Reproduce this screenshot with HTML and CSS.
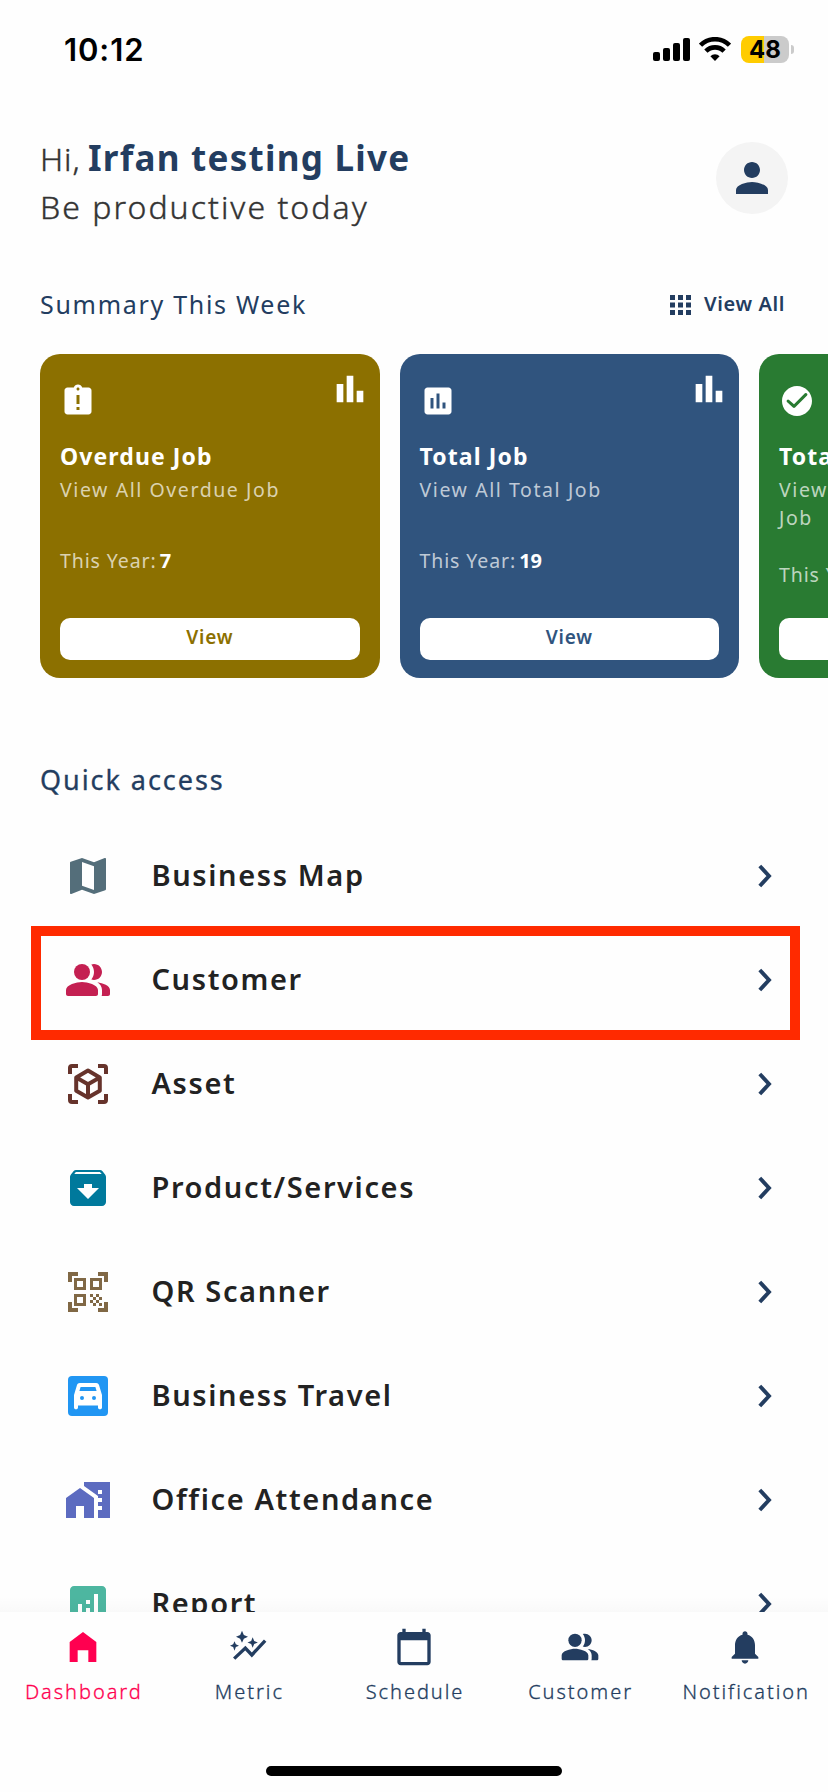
FILE: index.html
```html
<!DOCTYPE html>
<html lang="en">
<head>
<meta charset="utf-8">
<title>Dashboard</title>
<link rel="stylesheet" href="styles.css">
</head>
<body>
<svg width="0" height="0" class="defs" aria-hidden="true">
  <symbol id="chart" viewBox="0 0 24 24"><path d="M4 9h4v11H4zM10 4h4v16h-4zM16 13h4v7h-4z"/></symbol>
  <symbol id="chev" viewBox="0 0 14 24"><path d="M1.800 2 11 12 1.800 22" fill="none" stroke="currentColor" stroke-width="3.900" stroke-linejoin="miter"/></symbol>
  <symbol id="group" viewBox="0 0 24 24"><path d="M16.670 13.130C18.040 14.060 19 15.320 19 17v2c0 .35-.06.69-.18 1H22c.55 0 1-.45 1-1v-2c0-2.180-3.570-3.470-6.330-3.870z"/><circle cx="9" cy="8" r="4"/><path d="M15 12c2.210 0 4-1.790 4-4s-1.790-4-4-4c-.47 0-.91.10-1.330.24C14.500 5.270 15 6.580 15 8s-.5 2.730-1.330 3.760c.42.14.86.24 1.330.24zM9 13c-2.670 0-8 1.340-8 4v2c0 .55.45 1 1 1h14c.55 0 1-.45 1-1v-2c0-2.660-5.330-4-8-4z"/></symbol>
</svg>
<div class="screen">
  <main class="content">
    <header class="status">
      <span class="time">10:12</span>
      <div class="status-icons">
        <svg class="signal" viewBox="0 0 38 24"><rect x="0" y="15" width="7" height="9" rx="2"/><rect x="10" y="11" width="7" height="13" rx="2"/><rect x="20" y="6" width="7" height="18" rx="2"/><rect x="30" y="1" width="7" height="23" rx="2"/></svg>
        <svg class="wifi" viewBox="0 0 32 24"><g fill="none" stroke="#000" stroke-width="4.600"><path d="M1.500 8.200a20.500 20.500 0 0 1 29 0"/><path d="M6.900 14.200a12.800 12.800 0 0 1 18.200 0"/></g><path d="M16 24l-4.600-4.800a6.500 6.500 0 0 1 9.200 0z"/></svg>
        <div class="battery">48</div><span class="nub"></span>
      </div>
    </header>

    <section class="greeting">
      <div>
        <div class="hello"><span class="hi">Hi,</span><strong class="name">Irfan testing Live</strong></div>
        <div class="tagline">Be productive today</div>
      </div>
      <div class="avatar"><svg viewBox="0 0 24 24"><path d="M12 12c2.210 0 4-1.790 4-4s-1.790-4-4-4-4 1.790-4 4 1.790 4 4 4zm0 2c-2.670 0-8 1.340-8 4v2h16v-2c0-2.660-5.330-4-8-4z"/></svg></div>
    </section>

    <div class="section-head">
      <h2 class="summary-title">Summary This Week</h2>
      <a class="view-all"><svg viewBox="0 0 21 20"><path d="M0 0h5v5H0zM8 0h5v5H8zM16 0h5v5h-5zM0 7.500h5v5H0zM8 7.500h5v5H8zM16 7.500h5v5h-5zM0 15h5v5H0zM8 15h5v5H8zM16 15h5v5h-5z"/></svg><span>View All</span></a>
    </div>

    <section class="cards">
      <article class="card gold">
        <svg class="trend"><use href="#chart"/></svg>
        <svg class="kind" viewBox="0 0 24 24"><path fill-rule="evenodd" d="M19 3h-4.180C14.400 1.840 13.300 1 12 1s-2.400.84-2.820 2H5c-1.100 0-2 .9-2 2v14c0 1.100.9 2 2 2h14c1.100 0 2-.9 2-2V5c0-1.100-.9-2-2-2zm-6 15h-2v-2h2v2zm0-4h-2V8h2v6zm-1-9c-.55 0-1-.45-1-1s.45-1 1-1 1 .45 1 1-.45 1-1 1z"/></svg>
        <h3>Overdue Job</h3>
        <p class="sub">View All Overdue Job</p>
        <p class="year"><span>This Year:</span><b>7</b></p>
        <div class="btn">View</div>
      </article>
      <article class="card blue">
        <svg class="trend"><use href="#chart"/></svg>
        <svg class="kind" viewBox="0 0 24 24"><path fill-rule="evenodd" d="M19 3H5c-1.100 0-2 .9-2 2v14c0 1.100.9 2 2 2h14c1.100 0 2-.9 2-2V5c0-1.100-.9-2-2-2zM9 17H7v-7h2v7zm4 0h-2V7h2v10zm4 0h-2v-4h2v4z"/></svg>
        <h3>Total Job</h3>
        <p class="sub">View All Total Job</p>
        <p class="year"><span>This Year:</span><b>19</b></p>
        <div class="btn">View</div>
      </article>
      <article class="card green">
        <svg class="kind" viewBox="0 0 24 24"><path fill-rule="evenodd" d="M12 2C6.480 2 2 6.480 2 12s4.480 10 10 10 10-4.480 10-10S17.520 2 12 2zM10.700 16.300c-.39.39-1.020.39-1.410 0L5.300 12.710A1 1 0 0 1 6.710 11.300L10 14.170l7.290-7.290A1 1 0 0 1 18.700 8.290z"/></svg>
        <h3>Total</h3>
        <p class="sub">View<br>Job</p>
        <p class="year"><span>This Year:</span></p>
        <div class="btn"></div>
      </article>
    </section>

    <h2 class="quick-title">Quick access</h2>
    <ul class="rows">
      <li class="row"><svg class="ico map" viewBox="0 0 24 24"><path fill-rule="evenodd" d="M20.500 3l-.16.03L15 5.100 9 3 3.360 4.900c-.21.07-.36.25-.36.48V20.500c0 .28.22.5.5.5l.16-.03L9 18.900l6 2.100 5.640-1.900c.21-.07.36-.25.36-.48V3.500c0-.28-.22-.5-.5-.5zM15 19l-6-2.110V5l6 2.110V19z"/></svg><span class="label">Business Map</span><svg class="chev"><use href="#chev"/></svg></li>
      <li class="row marked"><svg class="ico people"><use href="#group"/></svg><span class="label">Customer</span><svg class="chev"><use href="#chev"/></svg></li>
      <li class="row"><svg class="ico asset" viewBox="0 0 24 24"><g fill="none" stroke="currentColor" stroke-width="2"><path d="M3 7V4a1 1 0 0 1 1-1h3M17 3h3a1 1 0 0 1 1 1v3M21 17v3a1 1 0 0 1-1 1h-3M7 21H4a1 1 0 0 1-1-1v-3"/><path stroke-linejoin="round" d="M12 5.300 6.100 8.700v6.700L12 18.800l5.900-3.400V8.700zM6.100 8.700 12 12.100l5.900-3.400M12 12.100v6.700"/></g></svg><span class="label">Asset</span><svg class="chev"><use href="#chev"/></svg></li>
      <li class="row"><svg class="ico archive" viewBox="0 0 24 24"><path fill-rule="evenodd" d="M20.540 5.230l-1.390-1.680C18.880 3.210 18.470 3 18 3H6c-.47 0-.88.21-1.160.55L3.460 5.230C3.170 5.570 3 6.020 3 6.500V19c0 1.100.9 2 2 2h14c1.100 0 2-.9 2-2V6.500c0-.48-.17-.93-.46-1.270zM12 17.500L6.500 12H10v-2h4v2h3.500L12 17.500zM5.120 5l.81-1h12l.94 1H5.120z"/></svg><span class="label">Product/Services</span><svg class="chev"><use href="#chev"/></svg></li>
      <li class="row"><svg class="ico qr" viewBox="0 0 24 24"><path fill-rule="evenodd" d="M9.500 6.500v3h-3v-3h3M11 5H5v6h6V5zm-1.500 9.500v3h-3v-3h3M11 13H5v6h6v-6zm6.500-6.500v3h-3v-3h3M19 5h-6v6h6V5zm-6 8h1.500v1.500H13V13zm1.500 1.500H16V16h-1.500v-1.500zM16 13h1.500v1.500H16V13zm-3 3h1.500v1.500H13V16zm1.500 1.500H16V19h-1.500v-1.500zM16 16h1.500v1.500H16V16zm1.500-1.500H19V16h-1.500v-1.500zm0 3H19V19h-1.500v-1.500zM22 7h-2V4h-3V2h5v5zm0 15v-5h-2v3h-3v2h5zM2 22h5v-2H4v-3H2v5zM2 2v5h2V4h3V2H2z"/></svg><span class="label">QR Scanner</span><svg class="chev"><use href="#chev"/></svg></li>
      <li class="row"><svg class="ico travel" viewBox="0 0 24 24"><rect x="2" y="2" width="20" height="20" rx="2"/><path fill="#fff" fill-rule="evenodd" d="M17.500 6.500c-.2-.6-.7-1-1.400-1H7.900c-.7 0-1.200.4-1.400 1L5 11.500v6.200c0 .5.4.9 1 .9s1-.4 1-.9v-.9h10v.9c0 .5.4.9 1 .9s1-.4 1-.9v-6.200zM8.300 7.500h7.400l.6 2H7.700zM9 14a1 1 0 1 1 0-2 1 1 0 0 1 0 2zM15 14a1 1 0 1 1 0-2 1 1 0 0 1 0 2z"/></svg><span class="label">Business Travel</span><svg class="chev"><use href="#chev"/></svg></li>
      <li class="row"><svg class="ico office" viewBox="0 0 24 24"><path d="M1 11v10h5v-6h4v6h5V11L8 6z"/><path fill-rule="evenodd" d="M10 3v1.970l7 5V11h2v2h-2v2h2v2h-2v4h6V3H10zm9 6h-2V7h2v2z"/></svg><span class="label">Office Attendance</span><svg class="chev"><use href="#chev"/></svg></li>
      <li class="row"><svg class="ico report" viewBox="0 0 24 24"><path fill-rule="evenodd" d="M19 3H5c-1.100 0-2 .9-2 2v14c0 1.100.9 2 2 2h14c1.100 0 2-.9 2-2V5c0-1.100-.9-2-2-2zM9 17H7v-5h2v5zm4 0h-2v-3h2v3zm0-5h-2v-2h2v2zm4 5h-2V7h2v10z"/></svg><span class="label">Report</span><svg class="chev"><use href="#chev"/></svg></li>
    </ul>
    <div class="fade"></div>
  </main>

  <nav class="tabs">
    <a class="tab active"><svg viewBox="0 0 24 24"><path d="M4 9v12h4.800v-7h6.400v7H20V9l-8-6z"/></svg><span>Dashboard</span></a>
    <a class="tab"><svg viewBox="0 0 24 24"><path d="M3.700 19 10.400 12.600 14.300 16.800 22.300 8.200" fill="none" stroke="currentColor" stroke-width="2"/><path d="M8.400 2.300l1.100 2.500L12 5.900 9.500 7 8.400 9.500 7.300 7 4.800 5.900l2.500-1.100zM3.900 8.500l.8 1.900 1.900.8-1.900.8-.8 2.200-.8-2.200-1.900-.8 1.900-.8zM14.800 6.200l.9 2.200 2.200.9-2.200.9-.9 2.200-.9-2.200-2.200-.9 2.200-.9z"/></svg><span>Metric</span></a>
    <a class="tab"><svg viewBox="0 0 24 24"><path fill-rule="evenodd" d="M20 3h-1V1h-2v2H7V1H5v2H4c-1.100 0-2 .9-2 2v16c0 1.100.9 2 2 2h16c1.100 0 2-.9 2-2V5c0-1.100-.9-2-2-2zm0 18H4V8h16v13z"/></svg><span>Schedule</span></a>
    <a class="tab"><svg><use href="#group"/></svg><span>Customer</span></a>
    <a class="tab"><svg viewBox="0 0 24 24"><path d="M12 22c1.100 0 2-.9 2-2h-4c0 1.100.89 2 2 2zm6-6v-5c0-3.070-1.640-5.640-4.500-6.320V4c0-.83-.67-1.500-1.500-1.500s-1.500.67-1.500 1.500v.68C7.630 5.360 6 7.920 6 11v5l-2 2v1h16v-1l-2-2z"/></svg><span>Notification</span></a>
  </nav>
  <div class="home-bar"></div>
</div>
</body>
</html>
```
FILE: styles.css
```css
*, *::after { box-sizing: border-box; }
body { margin: 0; background: #fefefe; color: #233d60; font-family: "Noto Sans", "Open Sans", sans-serif; }
h2, h3, p, ul { margin: 0; padding: 0; }
svg { display: block; fill: currentColor; flex: none; }
.defs { position: absolute; }
.screen { width: 828px; height: 1792px; overflow: hidden; display: flex; flex-direction: column; }
.content { position: relative; height: 1612px; flex: none; overflow: hidden; }

.status { height: 100px; padding: 0 34px 0 64px; display: flex; justify-content: space-between; color: #000; font-family: Inter, sans-serif; }
.time { font-size: 31px; font-weight: 600; line-height: 40px; padding-top: 30px; letter-spacing: .9px; }
.status-icons { display: flex; align-items: flex-start; padding-top: 36px; }
.signal { width: 38px; height: 24px; margin: 1px 8px 0 0; }
.wifi { width: 32px; height: 24px; margin: 1px 10px 0 0; }
.battery { width: 48px; height: 27px; border-radius: 8px; background: linear-gradient(90deg, #ffcc00 48%, #cbcbcb 48%); font-size: 24px; font-weight: 700; line-height: 27px; text-align: center; }
.nub { width: 3px; height: 9px; margin: 9px 0 0 2px; border-radius: 0 4px 4px 0; background: #cbcbcb; }

.greeting { display: flex; justify-content: space-between; padding: 33px 40px 0; height: 184px; color: #333; }
.hello { display: flex; align-items: baseline; height: 49px; line-height: 49px; white-space: nowrap; }
.hi { font-size: 32px; font-weight: 300; width: 48px; letter-spacing: .9px; -webkit-text-stroke: .4px currentColor; }
.name { font-size: 35px; font-weight: 700; color: #233d60; letter-spacing: 1.250px; }
.tagline { font-size: 32px; font-weight: 300; line-height: 49px; letter-spacing: 2.030px; -webkit-text-stroke: .4px currentColor; }
.avatar { width: 72px; height: 72px; margin-top: 9px; border-radius: 50%; background: #f4f4f4; display: flex; align-items: center; justify-content: center; color: #233d60; }
.avatar svg { width: 48px; height: 48px; }

.section-head { display: flex; justify-content: space-between; height: 40px; padding: 0 43px 0 40px; line-height: 40px; }
.summary-title { font-size: 25px; font-weight: 400; letter-spacing: 1.700px; }
.view-all { display: flex; align-items: center; gap: 13px; font-size: 20px; font-weight: 600; letter-spacing: .6px; }
.view-all svg { width: 21px; height: 20px; margin-top: 2px; }

.cards { display: flex; gap: 20px; margin-top: 30px; padding-left: 40px; height: 324px; }
.card { position: relative; flex: 0 0 339.500px; padding: 29px 20px 18px; border-radius: 20px; color: #fff; display: flex; flex-direction: column; white-space: nowrap; }
.gold { background: #8c7000; --tone: #8c7000; }
.blue { background: #30547e; --tone: #30547e; }
.green { background: #297b32; --tone: #297b32; }
.trend { position: absolute; right: 10px; top: 15px; width: 40px; height: 40px; }
.kind { width: 36px; height: 36px; }
.card h3 { font-size: 23px; font-weight: 700; line-height: 32px; margin-top: 21px; letter-spacing: 1.100px; }
.sub { font-size: 19.500px; line-height: 28px; min-height: 42px; margin-top: 4px; letter-spacing: 1.580px; color: rgba(255,255,255,.7); }
.year { display: flex; align-items: baseline; gap: 3px; font-size: 19.500px; line-height: 28px; margin-top: 29px; color: rgba(255,255,255,.7); letter-spacing: .9px; }
.year b { font-size: 20px; color: #fff; letter-spacing: 0; }
.btn { height: 42px; margin-top: auto; border-radius: 10px; background: #fff; color: var(--tone); font-size: 19px; font-weight: 600; line-height: 39px; text-align: center; letter-spacing: .8px; }

.quick-title { margin: 82px 0 24px 40px; font-size: 27px; font-weight: 400; line-height: 40px; letter-spacing: 1.950px; -webkit-text-stroke: .3px currentColor; }
.rows { list-style: none; }
.row { position: relative; height: 104px; display: flex; align-items: center; padding: 0 56px 0 64px; }
.ico { width: 48px; height: 48px; }
.map { color: #546e7a; }
.people { color: #c42052; }
.asset { color: #66332b; }
.archive { color: #00799c; }
.qr { color: #806845; }
.travel { color: #2196f3; }
.office { color: #5c6bc0; }
.report { color: #4db6a0; }
.label { flex: 1; margin: -3px 0 0 39.500px; font-size: 29px; font-weight: 600; color: #222; letter-spacing: 1.620px; white-space: nowrap; }
.chev { width: 14px; height: 24px; }
.marked::after { content: ""; position: absolute; left: 31px; top: -2px; width: 769px; height: 114px; border: 10px solid #ff2a00; }
.fade { position: absolute; left: 0; right: 0; bottom: 0; height: 16px; background: linear-gradient(rgba(0,0,0,0), rgba(0,0,0,.02)); }

.tabs { display: grid; grid-template-columns: repeat(5, 1fr); height: 154px; flex: none; padding-top: 15px; }
.tab { display: flex; flex-direction: column; align-items: center; }
.tab svg { width: 40px; height: 40px; }
.tab span { font-size: 20px; font-weight: 300; line-height: 28px; margin: 11px -2px 0 0; letter-spacing: 1.950px; white-space: nowrap; -webkit-text-stroke: .3px currentColor; }
.active { color: #ff0050; }
.home-bar { width: 296px; height: 10px; border-radius: 5px; background: #000; margin: 0 auto; }
```
